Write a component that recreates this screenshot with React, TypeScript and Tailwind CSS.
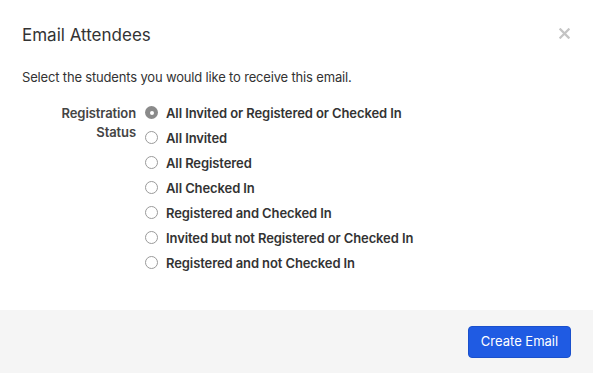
import React, { useState } from 'react';

const options = [
  'All Invited or Registered or Checked In',
  'All Invited',
  'All Registered',
  'All Checked In',
  'Registered and Checked In',
  'Invited but not Registered or Checked In',
  'Registered and not Checked In',
];

const Radio: React.FC<{ checked: boolean }> = ({ checked }) =>
  checked ? (
    <span className="w-[13px] h-[13px] rounded-full bg-[#8a8a8a] flex items-center justify-center shrink-0">
      <span className="w-[4px] h-[4px] rounded-full bg-white" />
    </span>
  ) : (
    <span className="w-[13px] h-[13px] rounded-full border border-[#9a9a9a] bg-white shrink-0" />
  );

const App: React.FC = () => {
  const [selected, setSelected] = useState(0);

  return (
    <div className="w-[593px] h-[373px] bg-white flex flex-col text-[#2e2e2e]" style={{ fontFamily: 'Inter, "Liberation Sans", sans-serif' }}>
      <div className="flex items-center justify-between pl-[22px] pr-[23px] pt-[22px] h-[47px]">
        <h2 className="text-[17px] leading-[24px] font-normal text-[#333]">Email Attendees</h2>
        <button className="text-[#c4c4c4] w-[12px] h-[12px] flex items-center justify-center -mt-[2px]">
          <svg viewBox="0 0 12 12" className="w-[11px] h-[11px]">
            <path d="M1.5 1.5l9 9M10.5 1.5l-9 9" stroke="currentColor" strokeWidth="2.4" strokeLinecap="square" />
          </svg>
        </button>
      </div>

      <div className="flex-1 px-[22px] pt-[22px]">
        <p className="text-[13px] leading-[16px] text-[#333] tracking-[-0.17px]">Select the students you would like to receive this email.</p>
        <div className="flex mt-[15px]">
          <div className="w-[114px] pt-[4px] text-right text-[13px] leading-[19px] font-semibold text-[#444] tracking-[-0.1px]">
            Registration
            <br />
            Status
          </div>
          <div className="flex flex-col ml-[9px]">
            {options.map((opt, i) => (
              <label key={opt} onClick={() => setSelected(i)} className="flex items-center h-[25px] cursor-pointer">
                <Radio checked={selected === i} />
                <span className="ml-[8px] text-[13px] font-semibold text-[#333] leading-[16px] tracking-[-0.1px]">{opt}</span>
              </label>
            ))}
          </div>
        </div>
      </div>

      <div className="h-[63px] bg-[#f5f5f5] flex items-center justify-end pr-[22px]">
        <button className="h-[32px] w-[103px] rounded-[4px] bg-[#1f5be3] text-white text-[13px] border border-[#1a50cc]">Create Email</button>
      </div>
    </div>
  );
};

export default App;
